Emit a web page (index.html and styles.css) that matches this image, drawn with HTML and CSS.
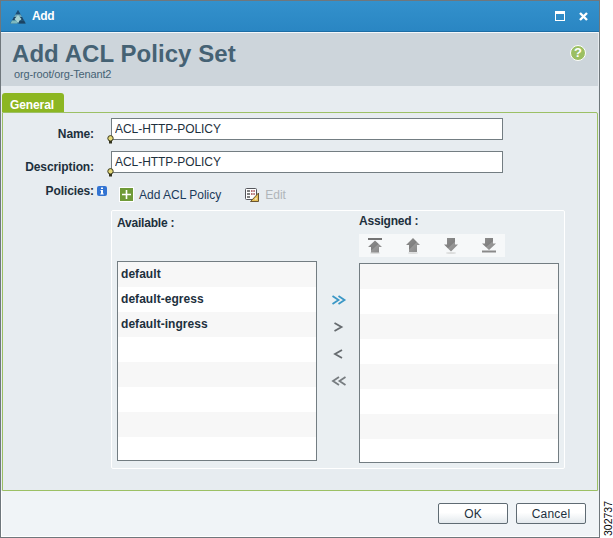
FILE: index.html
```html
<!DOCTYPE html>
<html lang="en">
<head>
    <meta charset="UTF-8">
    <meta name="viewport" content="width=device-width, initial-scale=1.0">
    <title>Add ACL Policy Set</title>
    <link rel="stylesheet" href="styles.css">
</head>
<body>
    <div class="window">
        <div class="titlebar">
            <svg class="logo" width="16" height="14" viewBox="0 0 16 14">
                <path d="M8 0l8 13.500H0z" fill="#2a6a8e"/>
                <path d="M8 0l2.500 4.500h-5z" fill="#1b4c74"/>
                <path d="M5.500 4.500h5L12 7H4z" fill="#6fa5b5"/>
                <path d="M4 7h3l-2 3H2.500zM12 7H9l2 3h2.500z" fill="#1a4365"/>
                <path d="M8 5l3.500 4L8 13 4.500 9z" fill="#a9d3d3"/>
                <path d="M2 10.500h4.500l1 3H.5z" fill="#7db9be"/>
                <path d="M9.500 10.500H14l1.500 3H8.500z" fill="#1a4365"/>
            </svg>
            <span class="caption">Add</span>
            <svg class="max" width="10" height="10" viewBox="0 0 10 10" shape-rendering="crispEdges">
                <path d="M0 0h10v10H0zM1 3v6h8V3z" fill="#fff" fill-rule="evenodd"/>
            </svg>
            <svg class="close" width="9" height="9" viewBox="0 0 9 9">
                <path d="M1 1l7 7M8 1L1 8" stroke="#fff" stroke-width="2.4"/>
            </svg>
        </div>
        <div class="header">
            <div>
                <h1>Add ACL Policy Set</h1>
                <p class="path">org-root/org-Tenant2</p>
            </div>
            <div class="help">?</div>
        </div>
        <div class="tabs"><div class="tab">General</div></div>

        <div class="panel">
            <div class="row">
                <label for="name">Name:</label>
                <div class="field">
                    <input type="text" id="name" value="ACL-HTTP-POLICY">
                    <svg class="bulb" width="7" height="9" viewBox="0 0 7 9">
                        <circle cx="3.5" cy="3.3" r="2.7" fill="#e3d878" stroke="#3b3a20"/>
                        <path d="M2 6h3v2.5H2z" fill="#33331f"/>
                    </svg>
                </div>
            </div>
            <div class="row">
                <label for="description">Description:</label>
                <div class="field">
                    <input type="text" id="description" value="ACL-HTTP-POLICY">
                    <svg class="bulb" width="7" height="9" viewBox="0 0 7 9">
                        <circle cx="3.5" cy="3.3" r="2.7" fill="#e3d878" stroke="#3b3a20"/>
                        <path d="M2 6h3v2.5H2z" fill="#33331f"/>
                    </svg>
                </div>
            </div>
            <div class="policies">
                <label>Policies:</label>
                <svg class="info" width="10" height="10" viewBox="0 0 10 10">
                    <rect width="10" height="10" rx="2" fill="#3374d2"/>
                    <path d="M4 1.5h2V3H4zM3.5 4H6v3.5h.7v1H3.3v-1H4V5h-.5z" fill="#fff"/>
                </svg>
                <svg class="plus" width="15" height="15" viewBox="0 0 15 15">
                    <rect width="15" height="15" fill="#fff"/>
                    <rect x="1" y="1" width="13" height="13" fill="#6f9a38"/>
                    <path d="M7.5 3v9M3 7.5h9" stroke="#fff" stroke-width="1.6"/>
                </svg>
                <span class="link">Add ACL Policy</span>
                <svg class="edit" width="15" height="14" viewBox="0 0 15 14">
                    <rect x=".5" y=".5" width="11" height="11" rx="1" fill="#fff" stroke="#55565c"/>
                    <path d="M2 3h3M2 6h3M2 9h3" stroke="#555" stroke-width="1.6"/>
                    <path d="M6 3h4M6 6h4" stroke="#a1484e" stroke-width="1.6" stroke-dasharray="1.6 .7"/>
                    <path d="M13.5 5v8.5h-8z" fill="#e5bf58" stroke="#6b5530"/>
                    <path d="M11.5 9.5v2h-2z" fill="#fff"/>
                </svg>
                <span class="link disabled">Edit</span>
            </div>

            <div class="chooser">
                <div class="available">
                    <h2>Available :</h2>
                    <ul class="list">
                        <li>default</li>
                        <li>default-egress</li>
                        <li>default-ingress</li>
                    </ul>
                </div>
                <div class="movers">
                    <svg width="16" height="10" viewBox="0 0 16 10"><path d="M1.5 1l6 4-6 4M7.5 1l6 4-6 4" stroke="#3a97c6"/></svg>
                    <svg width="16" height="10" viewBox="0 0 16 10"><path d="M3.5 1l7 4-7 4" stroke="#666b6f"/></svg>
                    <svg width="16" height="10" viewBox="0 0 16 10"><path d="M11 1L4 5l7 4" stroke="#666b6f"/></svg>
                    <svg width="16" height="10" viewBox="0 0 16 10"><path d="M8 1L2 5l6 4M14.5 1l-6 4 6 4" stroke="#777c80"/></svg>
                </div>
                <div class="assigned">
                    <h2>Assigned :</h2>
                    <div class="order">
                        <svg width="16" height="16" viewBox="0 0 16 16">
                            <ellipse cx="8" cy="15" rx="5" ry="1" fill="#dcdddd"/>
                            <path d="M1 0h14v2H1z" fill="#737373"/>
                            <path d="M8 2.500l7 6.500h-3v5.500H4V9H1z" fill="url(#metal)"/>
                        </svg>
                        <svg width="16" height="16" viewBox="0 0 16 16">
                            <ellipse cx="8" cy="15" rx="5" ry="1" fill="#dcdddd"/>
                            <path d="M8 0l7 7h-3v7H4V7H1z" fill="url(#metal)"/>
                        </svg>
                        <svg width="16" height="16" viewBox="0 0 16 16">
                            <ellipse cx="8" cy="15" rx="5" ry="1" fill="#dcdddd"/>
                            <path d="M4 0h8v6.500h3l-7 7-7-7h3z" fill="url(#metal)"/>
                        </svg>
                        <svg width="16" height="16" viewBox="0 0 16 16">
                            <path d="M4 0h8v5.500h3l-7 6.500-7-6.500h3z" fill="url(#metal)"/>
                            <path d="M1 12.500h14v2H1z" fill="#8a8a8a"/>
                        </svg>
                    </div>
                    <ul class="list"></ul>
                </div>
            </div>
        </div>

        <div class="footer">
            <button>OK</button>
            <button>Cancel</button>
        </div>
    </div>
    <div class="figure">302737</div>

    <svg class="defs" width="0" height="0">
        <linearGradient id="metal" x1="0" y1="0" x2="1" y2="1">
            <stop offset="0" stop-color="#8f8f8f"/>
            <stop offset=".5" stop-color="#808080"/>
            <stop offset=".55" stop-color="#979797"/>
            <stop offset="1" stop-color="#858585"/>
        </linearGradient>
    </svg>
</body>
</html>
```
FILE: styles.css
```css
*{
    margin: 0;
    padding: 0;
    box-sizing: border-box;
}
body{
    display: flex;
    height: 538px;
    overflow: hidden;
    background-color: #fff;
    color: #1d303d;
    font-family: "Liberation Sans", Arial, sans-serif;
    font-size: 12px;
    line-height: 14px;
}
svg{
    display: block;
    flex: none;
}
.defs{
    position: absolute;
}
.window{
    display: flex;
    flex-direction: column;
    flex: none;
    width: 600px;
    height: 538px;
    border: 1px solid #6f777c;
    background-color: #e7ecf0;
}
.titlebar{
    display: flex;
    align-items: center;
    height: 31px;
    padding: 0 11px 0 9px;
    border-bottom: 1px solid #1c6da5;
    background: linear-gradient(#3391cc, #2a86c3);
    color: #fff;
    font-weight: bold;
}
.logo{
    margin-top: 1px;
}
.caption{
    flex: 1;
    margin-left: 6px;
    letter-spacing: -0.4px;
}
.close{
    margin-left: 14px;
}
.header{
    display: flex;
    justify-content: space-between;
    height: 54px;
    padding: 7px 12px 0 11px;
    border-top: 1px solid #f4f8fb;
    border-right: 1px solid #e7ecf0;
    background-color: #cdd5db;
    color: #456274;
}
h1{
    font-size: 24px;
    line-height: 28px;
    letter-spacing: 0.06px;
}
.path{
    margin-left: 2px;
    font-size: 11px;
    line-height: 13px;
    letter-spacing: -0.15px;
}
.help{
    width: 16px;
    height: 16px;
    margin-top: 5px;
    border: 1px solid #fff;
    border-radius: 50%;
    background-color: #9bbf62;
    color: #fff;
    font-size: 13px;
    font-weight: bold;
    line-height: 14px;
    text-align: center;
}
.tabs{
    display: flex;
    height: 26px;
    padding: 7px 0 0 1px;
}
.tab{
    width: 62px;
    padding: 5px 0 0 8px;
    border-radius: 3px 3px 0 0;
    background-color: #8cb622;
    color: #fff;
    font-weight: bold;
    letter-spacing: -0.1px;
}
.panel{
    height: 379px;
    margin: 0 1px;
    padding: 5px 0 0 8px;
    border: 1px solid #9cc065;
    border-radius: 0 2px 0 0;
}
.row{
    display: flex;
    height: 33px;
}
label{
    width: 83px;
    font-weight: bold;
    text-align: right;
    letter-spacing: -0.1px;
}
.row label{
    padding-top: 9px;
}
.field{
    position: relative;
    margin-left: 17px;
}
input{
    display: block;
    width: 392px;
    height: 22px;
    padding: 0 3px 1px;
    border: 1px solid #737d82;
    border-radius: 0;
    background-color: #fff;
    color: #1d303d;
    font: inherit;
    letter-spacing: -0.05px;
}
.bulb{
    position: absolute;
    left: -4px;
    top: 17px;
}
.policies{
    display: flex;
    align-items: flex-start;
    height: 26px;
}
.info{
    margin: 2px 0 0 3px;
}
.plus{
    margin: 3px 0 0 12px;
}
.link{
    margin: 4px 0 0 5px;
    color: #1b3a5a;
    letter-spacing: 0;
}
.edit{
    margin: 4px 0 0 24px;
}
.disabled{
    color: #b0b5b9;
}
.chooser{
    display: flex;
    width: 454px;
    height: 259px;
    margin-left: 100px;
    padding-left: 5px;
    border: 1px solid #fff;
    border-radius: 2px;
    background-color: #eaeff2;
}
h2{
    font-size: 12px;
    line-height: 14px;
    letter-spacing: -0.2px;
}
.available h2{
    margin: 5px 0 31px;
}
.assigned h2{
    margin: 3px 0 6px;
}
.list{
    width: 200px;
    height: 200px;
    border: 1px solid #737d82;
    background: repeating-linear-gradient(#f7f7f7 0 25px, #fff 25px 50px);
    list-style: none;
}
.list li{
    height: 25px;
    padding: 5px 0 0 3px;
    font-weight: bold;
    letter-spacing: 0.05px;
}
.movers{
    display: flex;
    flex-direction: column;
    gap: 17px;
    width: 42px;
    padding: 84px 0 0 14px;
}
.movers path{
    fill: none;
    stroke-width: 1.8;
}
.order{
    display: flex;
    gap: 22px;
    width: 146px;
    height: 23px;
    margin-bottom: 6px;
    padding: 4px 0 0 8px;
    background-color: #f6f8f9;
}
.footer{
    display: flex;
    justify-content: flex-end;
    gap: 8px;
    flex: 1;
    padding: 12px 13px 0 0;
    border: solid #fff;
    border-width: 0 0 1px 1px;
    background-color: #f0f4f7;
}
button{
    width: 70px;
    height: 21px;
    border: 1px solid #5f6b73;
    border-radius: 2px;
    background: linear-gradient(#fff 45%, #e3e9ed);
    color: #1d303d;
    font: inherit;
    letter-spacing: 0.2px;
}
.figure{
    margin: 500px 0 0 2px;
    font-size: 10.5px;
    line-height: 12px;
    color: #000;
    writing-mode: vertical-rl;
    transform: rotate(180deg);
    height: 36px;
}
```
